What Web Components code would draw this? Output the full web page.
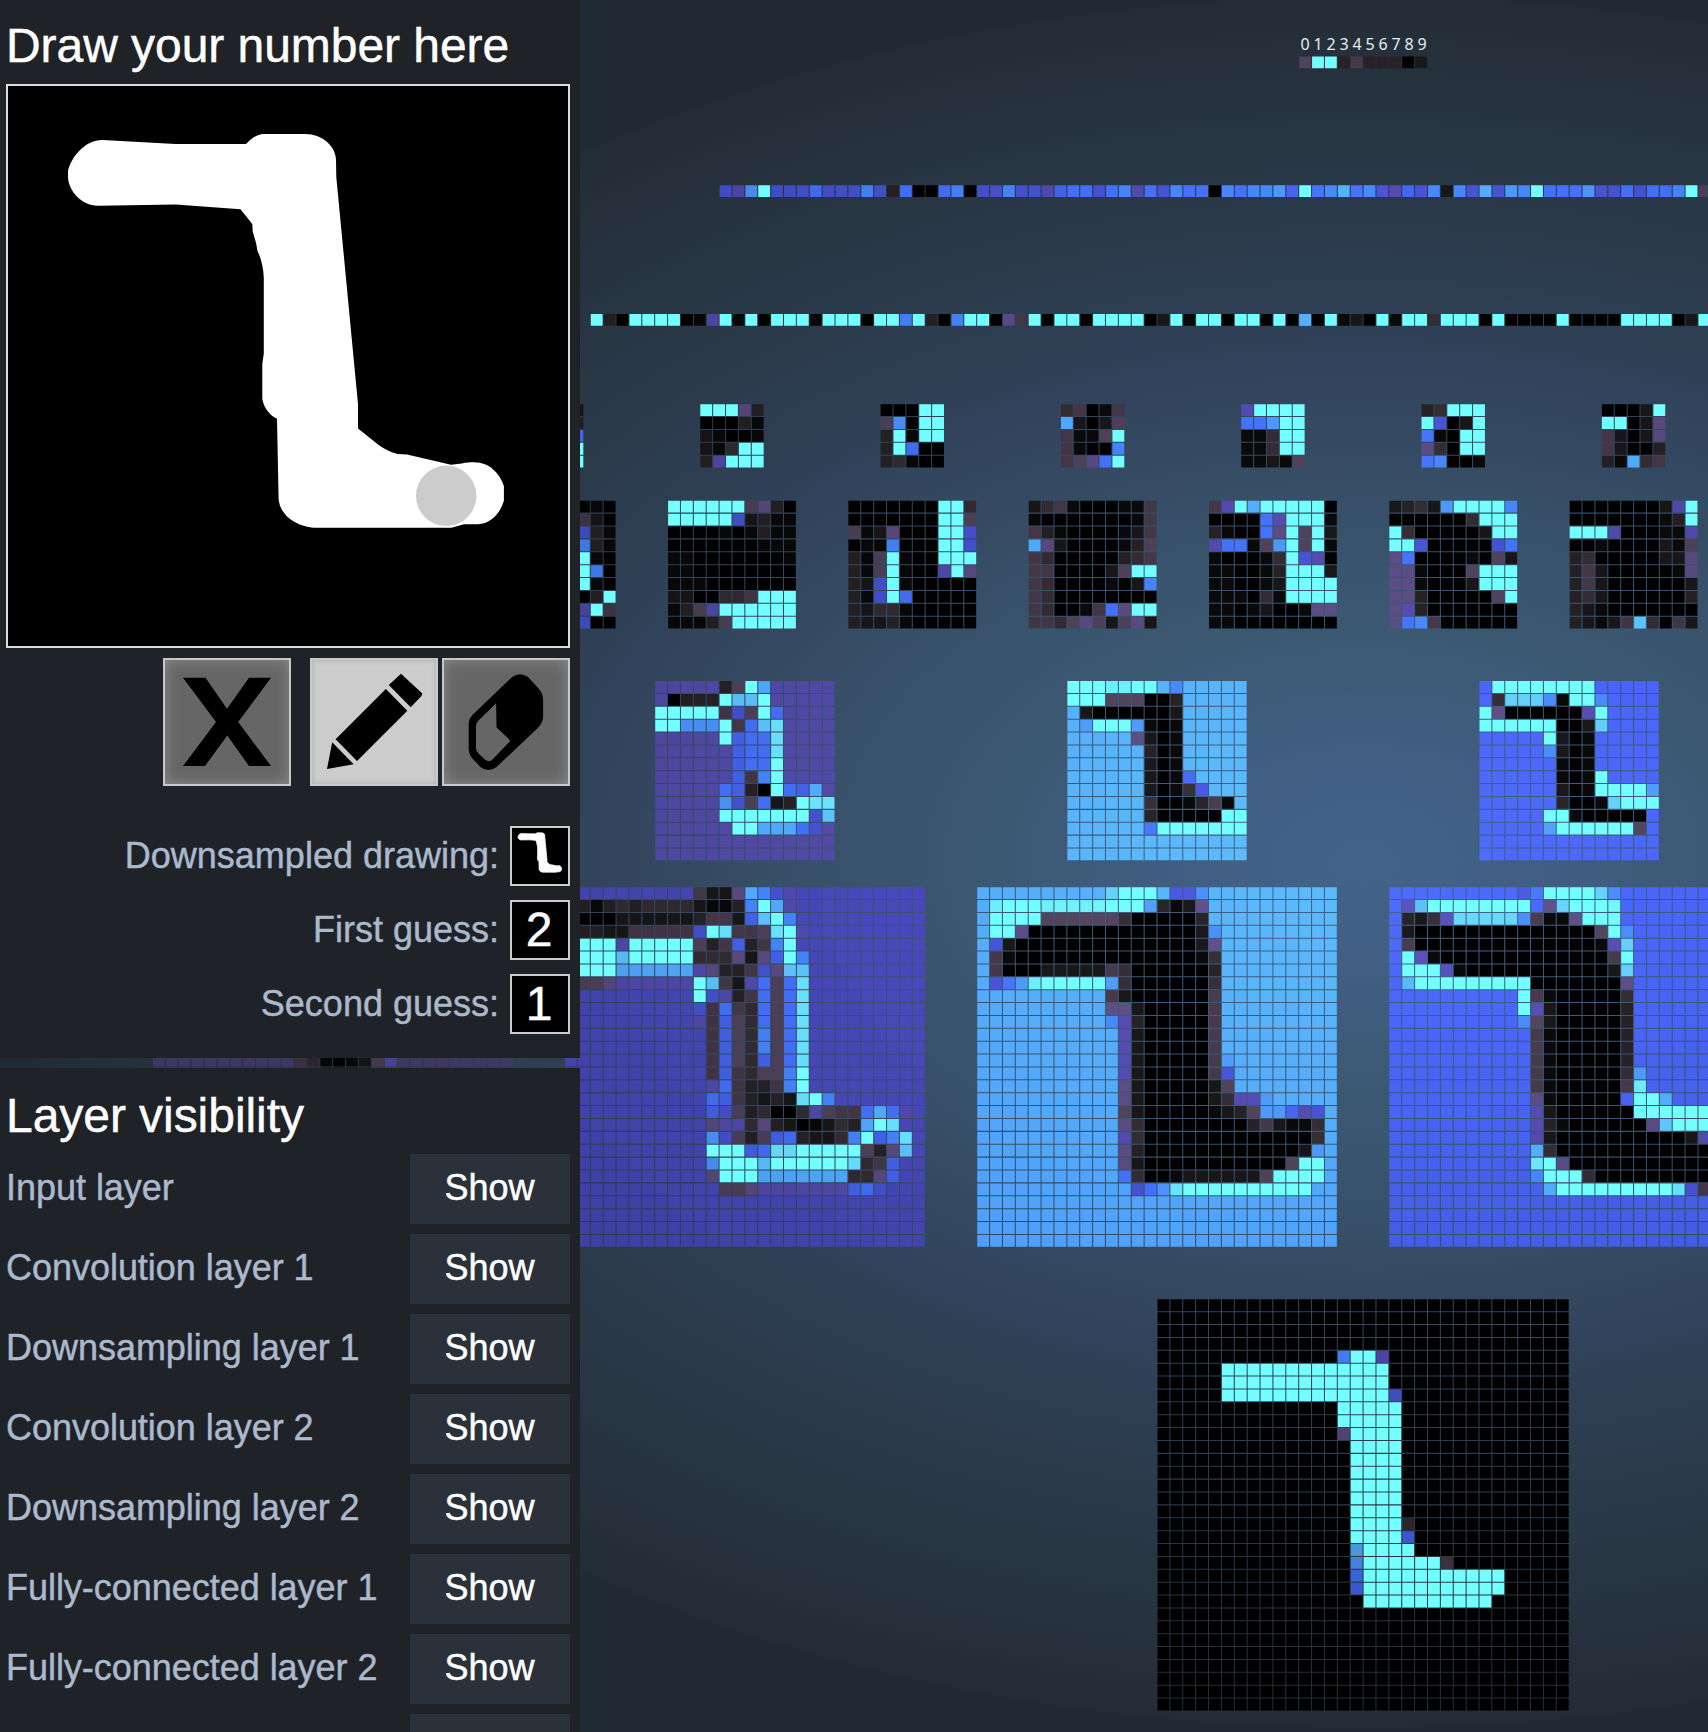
<!DOCTYPE html>
<html lang="en">
<head>
<meta charset="utf-8">
<title>Network visualization</title>
<style>
html,body{margin:0;height:100%;background:#20262e;overflow:hidden}
body{font-family:"Liberation Sans",Arial,sans-serif}
</style>
</head>
<body>
<nn-app></nn-app>
<script>
const P=12.88, OX=1299, OY=56;
const PALETTE={k:[0,0,0],j:[9,9,9],h:[23,22,23],d:[36,32,36],m:[50,43,50],n:[66,54,70],p:[77,63,86],q:[88,72,126],
 v:[80,72,168],i:[68,80,204],I:[67,96,230],b:[66,110,246],B:[68,130,248],e:[74,146,248],s:[80,168,250],S:[92,192,250],c:[104,224,254],C:[116,255,255]};
const U1=[70,70,181],U2=[80,163,278],U3=[68,94,230],UD1=[80,73,164],UD2=[82,167,274],UD3=[70,95,236],U0=[70,60,112];
const rep=(s,n)=>Array(n).fill(s);
const u=n=>'u'.repeat(n);
const pad=(rows,w,h)=>{const r=rows.map(s=>(s+u(w)).slice(0,w));while(r.length<h)r.push(u(w));return r};

const input=(()=>{
  const g=Array.from({length:32},()=>Array(32).fill('k'));
  const f=(r,a,b,ch='C')=>{for(let c=a;c<=b;c++)g[r][c]=ch};
  f(4,15,16);f(4,14,14,'B');f(4,17,17,'v');
  f(5,5,17);f(6,5,17);f(7,5,17);f(7,18,18,'i');
  f(8,14,18);f(9,14,18);f(10,14,14,'q');
  for(let r=10;r<=18;r++)f(r,15,18);
  f(17,19,19,'m');f(18,19,19,'I');
  f(19,15,15,'s');f(19,16,19);
  f(20,15,15,'e');f(20,16,21);f(20,22,22,'n');
  f(21,15,15,'b');f(21,16,26);f(22,15,15,'I');f(22,16,26);f(23,16,25);
  return g.map(r=>r.join(''));
})();

const conv1a=pad([
'uuuuuuuuuunhhqsBiv','mdjdmdmmmmhjjdBCsv','kkkkhhhhhhdnnhISCB','dddhhnnnnniCcnnpcCv','CCCCvCCCCCpdnIdnBC',
'CCCCSCCCCCmmmqhqICB','CCCCssssssvqddniqSS','pppqvvvvvvCSnhvbpbc','uuuuuuuuuuCivdnbpbc','uuuuuuuuuuinbnmbpbc',
'uuuuuuuuuuvnIpmbpbc','uuuuuuuuuuunIpmBpbc','uuuuuuuuuuunIpmBpbc','uuuuuuuuuuunIpmIpbc','uuuuuuuuuuunInmppBC',
'uuuuuuuuuuuvbnddnBC','uuuuuuuuuuubIndhdhcCB','uuuuuuuuuuuIipdmkkmvpnnbsbv','uuuuuuuuuuuqvvmqdhkjhmdsCc',
'uuuuuuuuuuueipdpIbdhhmBCIBc','uuuuuuuuuuuCCCIbccCCCCCpdqS','uuuuuuuuuuueCCCSCCCCCCcmnI','uuuuuuuuuuuqCCCsssssssmmqI',
'uuuuuuuuuuuuppqvvvvvvvIbi'],28,28);
const conv1b=pad([
'uuuuuuuuuuSCCCuiiB','ucCCCcccccCCCedjhq','uCCCCppppppmkkkkkd','uCCqkkkkkkkkkkkkkhB','uihkkkkkkkkkkkkkkhq',
'unjkkkkkkkkkkkkkkjm','unkkkhhhhhnmkkkkkkd','uibecCCCCCemkkkkkkm','uuuuuuuuuunhkkkkkkn','uuuuuuuuuuqqhkkkkkn',
'uuuuuuuuuuBvdkkkkkn','uuuuuuuuuuuvhkkkkkn','uuuuuuuuuuuvhkkkkkn','uuuuuuuuuuuvhkkkkkne','uuuuuuuuuuuvhkkkkkni',
'uuuuuuuuuuuqhkkkkkhp','uuuuuuuuuuuqhkkkkkhmvve','uuuuuuuuuuuphkkkkkjhdpeeIvi','uuuuuuuuuuuqmkkkkkkkkdnhjjm',
'uuuuuuuuuuuvmkkkkkkkkkkkkkm','uuuuuuuuuuuqdkkkkkkkkkkkkhe','uuuuuuuuuuuqhkkkkkkkkkkkpCC','uuuuuuuuuuubmkkjhhhhhhpCCCC',
'uuuuuuuuuuuuibecCCCCCCCCCC'],28,28);
const conv1c=pad([
'uuuuuuuuuuibCCCCSB','uvsCCCCCCCCIqSCCCc','udhmvSSSSSBnjjqCCC','uhkkkkkkkkkkkkkkpCB','unkkkkkkkkkkkkkkjvS',
'uCvjkkkkkkkkkkkkknC','uCCCvjkkkkkkkkkkkhS','usCCCCCCCCCkkkkkkkq','uuuuuuuuuuCnjkkkkkm','uuuuuuuuuuCvhkkkkkd',
'uuuuuuuuuuBphkkkkkd','uuuuuuuuuuunjkkkkkd','uuuuuuuuuuunjkkkkkd','uuuuuuuuuuunjkkkkkd','uuuuuuuuuuunjkkkkkme',
'uuuuuuuuuuunjkkkkknc','uuuuuuuuuuuqjkkkkkICCs','uuuuuuuuuuuvhkkkkkkCCCCCC','uuuuuuuuuuuvdjkkkkkkqSCCC',
'uuuuuuuuuuuvhkkkkkkkkkkhv','uuuuuuuuuuusmkkkkkkkkkkkk','uuuuuuuuuuucCqkkkkkkkkkkk','uuuuuuuuuuuBCCCmkkkkkkkkk',
'uuuuuuuuuuuIsCCCCCCCCCcin'],25,28);
const ds1a=pad(['uuuuudpCs','ukdddCSSC','CCCCCnipCb','CCeeeCnbSc','uuuuuCIbbc','uuuuuuIbbc','uuuuuuIbbC','uuuuuuInBC',
'uuuuubIdkCbIs','uuuuueipbhdCcc','uuuuuCCCCCCCiS','uuuuuuCCsssbi'],14,14);
const ds1b=pad(['CCCccCCuB','CCCpppkkd','uhkkkkkkh','ueCCCejkj','uuuuuqhkj','uuuuuudkj','uuuuuuhkj','uuuuuuhkjI','uuuuuuhkjmi',
'uuuuuumkkjdnj','uuuuuudkkkkkCC','uuuuuubCCCCCCC'],14,14);
const ds1c=pad(['uCCCCCCCC','umSSSBjCCB','CqkkkkkkvC','CCCCCCkkhS','uuuuuChkj','uuuuuBhkj','uuuuuujkj','uuuuuujkjC','uuuuuuhkjCCCCe',
'uuuuuudkkjSCCC','uuuuuCCjkkkkk','uuuuueCCCCCCp'],14,14);

const conv2=[
['kkkkkkkkjk','kkkkkkknhk','kkkkkkkidj','kkkkkkkBdj','kkkkkkkCjk','kkkkkkkCBk','kkkkkkkCjk','kkkkkkkkdC','kkkkkkkvCn','kkkkkkkikk'],
['CCCCCCpqdk','CCCCCihdjj','kkkkjkjdjj','kkkkkkkjjj','jjkkkkkkkj','jjkkkkkkkk','jjjkkkkkkk','hhkkmmnCCC','jdpvCCCCCC','jjjdpCCCCC'],
['kkkkkkkCCm','kkkkkkkCCp','pjhqkkkCCi','kjjBkkkCCi','djpCjkkCCC','djpCjkkvCq','dhiCjkkkkk','djiCbkkkkk','dhmmjkkkkk','dhhdjkkkkk'],
['hmnjkkkjjn','jkkkkkkkjn','ndjkkkkjhn','sqhkkkkjdp','nmkkkkkdmn','nnkkkkhpCC','nmkkkkjkhB','nmkkkkkkkk','nmkkjnbqCC','nnmpqphpqh'],
['nvCsCCCCCk','kkkkbvCCCj','djkkbqCpCh','vbbjpeCpCj','jkkkjmCivk','jjkkjdCCCh','jjkkjhCCCC','jjjkmjCCCC','jjkjhkkjqq','jjkkkkkkkk'],
['hdmheCCCCB','kkkkkkmCCC','CmkkkkkhCC','CCikkkkkib','qbkkkkjkph','qqjkkkpCCC','qqjkkkhCCC','qqdkkkkkpC','qvdkkkkkkk','qbBnkkkkkk'],
['kkkkkkkhvC','kkkkkkkjdC','CCCvkkkjjv','kkjkkkkhjp','dmkkkkkhhq','dnhkkkkkjq','dnhkkkkkkh','dmhkkkkkkd','dhjkkkkkkk','dhjhnSmknh']];
const ds2=[
['kkkkh','kkkkd','kkkkb','kkkkC','kkkkC'],
['CCCqd','kkkdj','hjkkj','hjmCC','dvCCC'],
['kkkCC','pekCC','dCjCC','dCbkk','dmjkk'],
['mnkjn','shkhp','njjpC','njkkB','npqbC'],
['vCCCC','bbeCC','jjmCC','jjmCC','jjhjp'],
['dmCCC','CikhC','bjkCC','qmkCC','bBkkj'],
['kkkhC','CCkhq','nhkhq','nhkkd','djsmn']];
const fc2=['iveCiiibiiiBidbkkbBkiiBiivIbbibBvbiBbbkBbBBeICbBsbBivIiBhBisieBCbbbeiibibbBCp'];
const fc1=['CdkCCCCkjvCjCkCCCjCCCkCCBCdkBCCkqnCkCCkCCCCkhCjCCkCCkCkskCjhkCjCCmCCCkCkkkkCkkkkCCCCkhC'];
const out=['pCCdndddkh'];

/* Map positions are in cells, relative to the first output cell. */
const MAPS=[[0,0,out],[-45,10,fc2],[-55,20,fc1],
 ...ds2.map((m,i)=>[-60.5+14*i,27,m]),...conv2.map((m,i)=>[-63+14*i,34.5,m]),
 [-50,48.5,ds1a,UD1],[-18,48.5,ds1b,UD2],[14,48.5,ds1c,UD3],
 [-57,64.5,conv1a,U1],[-25,64.5,conv1b,U2],[7,64.5,conv1c,U3],
 [-89,64.5,rep('uuuuuuuuuuunmjkjhpvuuuuuuuuu',28),U0],
 [-11,96.5,input]];

function define(name,html,setup){
  const t=document.createElement('template');t.innerHTML=html;
  customElements.define(name,class extends HTMLElement{
    constructor(){super();this.attachShadow({mode:'open'}).append(t.content.cloneNode(true))}
    connectedCallback(){if(setup)setup(this,this.shadowRoot)}
  });
}

define('nn-scene',`<style>:host{display:block;width:1708px;height:1732px}
svg{display:block}text{font-family:"Noto Sans","Open Sans",sans-serif;font-size:16px;fill:#e9ecef;white-space:pre}</style>
<svg width="1708" height="1732" viewBox="0 0 1708 1732">
<defs><radialGradient id="g" gradientUnits="userSpaceOnUse" cx="0" cy="0" r="1" gradientTransform="translate(1365 862) scale(1365 866)">
<stop offset="0" stop-color="#43638b"/><stop offset=".12" stop-color="#405f82"/><stop offset=".25" stop-color="#3c5975"/><stop offset=".37" stop-color="#39536c"/><stop offset=".5" stop-color="#344961"/><stop offset=".62" stop-color="#2f4056"/><stop offset=".77" stop-color="#2a3948"/><stop offset=".9" stop-color="#26323e"/><stop offset="1.02" stop-color="#232c36"/><stop offset="1" stop-color="#222b35"/></radialGradient></defs>
<rect width="1708" height="1732" fill="url(#g)"/><g id="cells"></g>
<text x="1300.4" y="50" textLength="126.3" lengthAdjust="spacing">0 1 2 3 4 5 6 7 8 9</text></svg>`,
(el,root)=>{
  const paths=new Map();
  for(const [mx,my,rows,base] of MAPS)rows.forEach((row,r)=>[...row].forEach((ch,c)=>{
    const x=OX+(mx+c)*P+.2,y=OY+(my+r)*P+.4;
    if(x>1708||y>1732||x<-13)return;
    let col=ch==='u'?base:PALETTE[ch];
    if(ch!=='C'){
      const dx=Math.abs(x-1365)/1365,d=Math.hypot(dx,(y-862)/866);
      const f=my<60?1.06-.25*dx:1.16-.36*Math.min(d,.75);
      const g=(base&&my<60)?1.16-.36*d:f;
      col=col.map(v=>Math.min(251,Math.round(v*g/2)*2));
    }
    const key='rgb('+col+')';
    paths.set(key,(paths.get(key)||'')+`M${x.toFixed(2)} ${y.toFixed(2)}h11.85v11.85h-11.85z`);
  }));
  root.getElementById('cells').innerHTML=[...paths].map(([c,d])=>`<path fill="${c}" d="${d}"/>`).join('');
});

const STROKE='M102.5 140L175.7 144H246C250 140 256 133.9 264 133.9H305C322 133.9 336 146 336 160L336.3 177L358 404V428.5L377.4 444C384 449 391 452.5 397.7 453.9L407 454.6L451 464.7L462 463.4C466 462.4 470 462.2 474 462.2C490 462.2 500 474 503.9 486V500.8C500 514 490 524 478 524.2H464L451.4 527.8H316.3C301 527.8 280 518 278.6 498.7L277 418.8C271 416 264 409 262.3 399V364L263.8 353.5V277.8C263.5 268 261 258 257.5 251L256 242.8L252.7 231.5L252.3 224.3C248 218 244 214 240.5 209.2L175.7 204.5L98 205.8C81 205.8 68 190 68 176.8V171C71 158 84 140 102.5 140Z';

define('draw-pad',`<style>:host{display:block;box-sizing:border-box;width:564px;height:564px;border:2px solid #dcdcdc;background:#000}svg{display:block}</style>
<svg width="560" height="560" viewBox="8 86 560 560"><path fill="#fff" d="${STROKE}"/><circle cx="446.2" cy="495.8" r="30.2" fill="#ccc"/></svg>`);

define('tool-button',`<style>:host{display:block;box-sizing:border-box;width:128px;height:128px;border:2px solid #c8c8c8;background:#666;box-shadow:inset 0 0 14px #8c8c8c}
:host([active]){background:#ccc;box-shadow:inset 0 0 5px #aaa}</style><slot></slot>`);

define('tool-row',`<style>:host{display:flex;justify-content:flex-end;gap:4px;margin-top:10px}
.clear{margin-right:15px}svg{display:block}</style>
<tool-button class="clear"><svg width="124" height="124" viewBox="2 2 124 124"><path d="M20 19.7H42.5L64 50.7L86 19.7H108L75.2 64L108 108H86L64.3 77.5L42 108H20L53 64Z"/></svg></tool-button>
<tool-button active><svg width="124" height="124" viewBox="2 2 124 124"><path d="M91 15.7L112.3 35.6L111.5 38L100.7 49.3L78.8 27ZM75.9 31L97.3 52.7L47 103L25.6 81.3ZM22.2 84.3L43.7 106.3L17 111Z"/></svg></tool-button>
<tool-button><svg width="124" height="124" viewBox="2 2 124 124"><path fill-rule="evenodd" d="M70.4 18.7Q78.5 13.5 86 19L97 31Q101.1 36 101.1 42V59Q101 64 96.3 69.5L54.5 109Q46.3 115 38.5 109L30 100Q26.7 96 26.7 91V65Q26.7 61 30.4 57ZM54.1 45.3L36 63Q34 65 34 68V90Q34 93 36 95L43.5 102Q47 104.5 50.5 101.5L68.5 82.7L54.5 69.3Z"/></svg></tool-button>`);

define('guess-row',`<style>:host{display:flex;justify-content:flex-end;align-items:center;gap:11px;height:60px;color:#abb9cd;font-size:36px;line-height:60px}
.box{box-sizing:border-box;width:60px;height:60px;border:2px solid #ccc;background:#000;color:#fff;font-size:48px;line-height:56px;text-align:center;text-indent:-2px;flex:none}
.label{white-space:nowrap}</style><span class="label"></span><div class="box"><slot></slot></div>`,
(el,root)=>{root.querySelector('.label').textContent=el.getAttribute('label')});

define('layer-row',`<style>:host{display:flex;justify-content:space-between;height:70px;line-height:68px;font-size:36px;color:#abb9cd;white-space:nowrap}
span{letter-spacing:-.03px}
button{width:160px;height:70px;margin:0;padding:0 1px 2px 0;border:0;background:#2a313a;color:#fff;font:inherit;line-height:68px;-webkit-text-stroke:inherit}</style>
<span><slot></slot></span><button type="button"></button>`,
(el,root)=>{root.querySelector('button').textContent=el.getAttribute('action')||''});

define('side-panel',`<style>:host{display:block;box-sizing:border-box;width:580px;padding:0 10px 0 6px;background:#1f2227;overflow:hidden}
h1{margin:0;font-weight:400;color:#fff;font-size:48px;letter-spacing:-.05px;white-space:nowrap;height:var(--head);line-height:var(--line)}</style><h1></h1><slot></slot>`,
(el,root)=>{root.querySelector('h1').textContent=el.getAttribute('heading')});

define('nn-app',`<style>:host{display:grid;width:1708px;height:1732px;overflow:hidden}
nn-scene,.side{grid-area:1/1}
.side{display:flex;flex-direction:column;gap:10px;width:580px;height:1732px;-webkit-text-stroke:.45px currentcolor}
.draw{height:1058px;flex:none;--head:84px;--line:92px}
.guesses{display:flex;flex-direction:column;gap:14px;margin-top:40px}
.layers{flex:1;min-height:0;--head:86px;--line:96px}
.list{display:flex;flex-direction:column;gap:10px}
svg{display:block}</style>
<nn-scene></nn-scene>
<div class="side">
<side-panel class="draw" heading="Draw your number here"><draw-pad></draw-pad><tool-row></tool-row>
<div class="guesses">
<guess-row label="Downsampled drawing:"><svg width="56" height="56" viewBox="8 86 560 560"><path fill="#fff" stroke="#fff" stroke-width="7" d="${STROKE}"/></svg></guess-row>
<guess-row label="First guess:">2</guess-row><guess-row label="Second guess:">1</guess-row></div></side-panel>
<side-panel class="layers" heading="Layer visibility"><div class="list">
<layer-row action="Show">Input layer</layer-row><layer-row action="Show">Convolution layer 1</layer-row><layer-row action="Show">Downsampling layer 1</layer-row><layer-row action="Show">Convolution layer 2</layer-row><layer-row action="Show">Downsampling layer 2</layer-row><layer-row action="Show">Fully-connected layer 1</layer-row><layer-row action="Show">Fully-connected layer 2</layer-row><layer-row></layer-row>
</div></side-panel></div>`);
</script>
</body>
</html>
